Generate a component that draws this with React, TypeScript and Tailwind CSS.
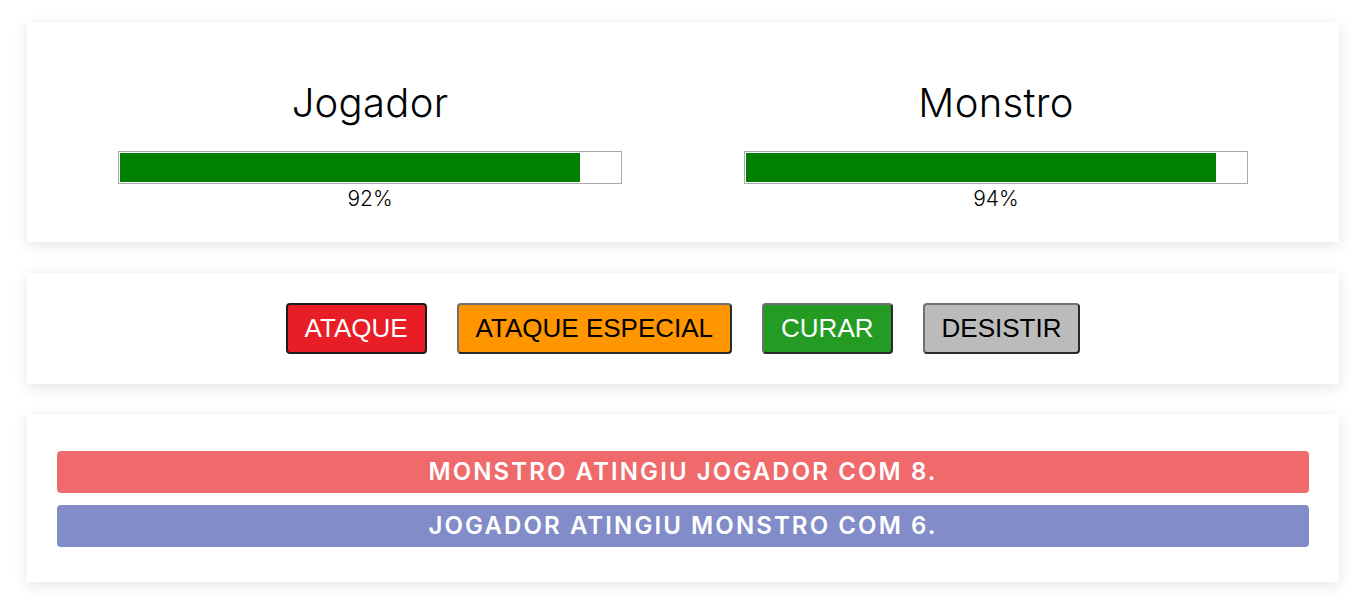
const card = "bg-white shadow-[0_3px_14px_rgba(0,0,0,0.11)]";

function Health({ name, value }: { name: string; value: number }) {
  return (
    <div className="w-[626px] flex flex-col items-center">
      <h2 className="text-[40px] leading-[48px] font-light tracking-[0.3px] text-black">{name}</h2>
      <div className="mt-[24px] w-[504px] h-[33px] border border-[#aaaaaa] p-px bg-white">
        <div className="h-full bg-[#008000]" style={{ width: `${value}%` }} />
      </div>
      <div className="text-[21px] leading-[30px] font-light text-black">{value}%</div>
    </div>
  );
}

export default function App() {
  return (
    <div className="min-h-[599px] bg-white pt-[23px] pb-4 font-['Inter',sans-serif]">
      <div className="ml-[27px] w-[1312px] flex flex-col gap-[31px]">
        <section className={`${card} h-[219px] pt-[56px] px-[30px] flex`}>
          <Health name="Jogador" value={92} />
          <Health name="Monstro" value={94} />
        </section>

        <section className={`${card} h-[111px] flex items-center justify-center gap-[30px] font-['Liberation_Sans',Arial,sans-serif] text-[26px]`}>
          <button className="h-[51px] px-[17px] rounded-[4px] border-2 border-[#1c1c1c] bg-[#e81d25] text-white">ATAQUE</button>
          <button className="h-[51px] px-[17px] rounded-[4px] border-2 border-t-[#707070] border-l-[#707070] border-b-[#2a2a2a] border-r-[#2a2a2a] bg-[#ff9600] text-black">ATAQUE ESPECIAL</button>
          <button className="h-[51px] px-[17px] rounded-[4px] border-2 border-t-[#707070] border-l-[#707070] border-b-[#2a2a2a] border-r-[#2a2a2a] bg-[#249c24] text-white">CURAR</button>
          <button className="h-[51px] px-[17px] rounded-[4px] border-2 border-t-[#707070] border-l-[#707070] border-b-[#2a2a2a] border-r-[#2a2a2a] bg-[#bbbbbb] text-black">DESISTIR</button>
        </section>

        <section className={`${card} h-[167px] pt-[36px] px-[30px] flex flex-col gap-[12px]`}>
          <div className="h-[42px] rounded-[4px] bg-[#f0696b] text-white flex items-center justify-center text-[24px] font-semibold tracking-[2.1px]">
            MONSTRO ATINGIU JOGADOR COM 8.
          </div>
          <div className="h-[42px] rounded-[4px] bg-[#818cc8] text-white flex items-center justify-center text-[24px] font-semibold tracking-[2.1px]">
            JOGADOR ATINGIU MONSTRO COM 6.
          </div>
        </section>
      </div>
    </div>
  );
}
